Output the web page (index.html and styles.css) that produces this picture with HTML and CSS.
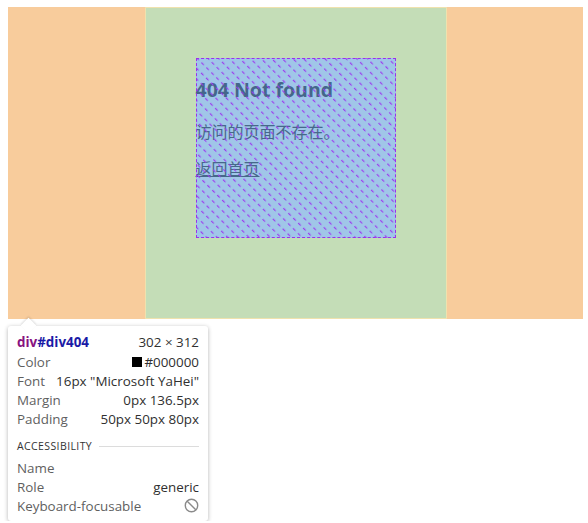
FILE: index.html
```html
<!DOCTYPE html>
<html lang="zh">
<head>
<meta charset="utf-8">
<title>404</title>
<link rel="stylesheet" href="styles.css">
</head>
<body>
<div class="page">
  <div class="margin-box">
    <div class="el">
      <div class="content">
        <h1 class="title">404 Not found</h1>
        <p class="msg">访问的页面不存在。</p>
        <p class="msg link-row"><a class="home" href="#">返回首页</a></p>
        <svg class="hatch" width="200" height="180" aria-hidden="true">
          <defs>
            <pattern id="hp" width="7.5" height="7" patternUnits="userSpaceOnUse" patternTransform="rotate(-45)">
              <line x1="0.6" y1="0" x2="0.6" y2="3.6" stroke="#9c3af0" stroke-width="1.15"/>
            </pattern>
          </defs>
          <rect x="0" y="0" width="200" height="180" fill="url(#hp)"/>
        </svg>
      </div>
    </div>
  </div>

  <div class="tip">
    <span class="arrow"></span>
    <div class="row head">
      <span class="sel"><span class="tag">div</span><span class="id">#div404</span></span>
      <span class="val">302 × 312</span>
    </div>
    <div class="row"><span class="lab">Color</span><span class="val"><span class="swatch"></span>#000000</span></div>
    <div class="row"><span class="lab">Font</span><span class="val">16px "Microsoft YaHei"</span></div>
    <div class="row"><span class="lab">Margin</span><span class="val">0px 136.5px</span></div>
    <div class="row"><span class="lab">Padding</span><span class="val">50px 50px 80px</span></div>
    <div class="sect"><span class="sect-name">ACCESSIBILITY</span><span class="rule"></span></div>
    <div class="row"><span class="lab">Name</span><span class="val"></span></div>
    <div class="row"><span class="lab">Role</span><span class="val">generic</span></div>
    <div class="row"><span class="lab">Keyboard-focusable</span>
      <svg class="ban" width="15" height="15" viewBox="0 0 14 14" aria-hidden="true">
        <circle cx="7" cy="7" r="5.8" fill="none" stroke="#8a8a8a" stroke-width="1.3"/>
        <line x1="3" y1="3" x2="11" y2="11" stroke="#8a8a8a" stroke-width="1.3"/>
      </svg>
    </div>
  </div>
</div>
</body>
</html>
```

FILE: styles.css
```css
html, body {
  margin: 0;
  padding: 0;
  background: #ffffff;
}

.page {
  padding: 7px 0 0 8px;
  width: 580px;
}

.margin-box {
  width: 575px;
  height: 312px;
  background: #f8cc9c;
  display: flex;
  justify-content: center;
}

.el {
  box-sizing: border-box;
  width: 302px;
  height: 312px;
  border: 1px solid #efe2ae;
  background: #c4ddb7;
  padding: 50px 50px 80px 50px;
}

.content {
  position: relative;
  width: 200px;
  height: 180px;
  background: #a0c6e8;
  font-family: "Noto Sans CJK SC", "Noto Sans", sans-serif;
  color: #46688a;
}

.content::after {
  content: "";
  position: absolute;
  inset: 0;
  border: 1px dashed #9a30ee;
  pointer-events: none;
}

.hatch {
  position: absolute;
  left: 0;
  top: 0;
  pointer-events: none;
}

.title {
  margin: 0;
  padding-top: 20px;
  font-size: 19.5px;
  line-height: 24px;
  font-weight: 700;
  color: #44678a;
  font-family: "Open Sans", "Noto Sans CJK SC", sans-serif;
}

.msg {
  margin: 18px 0 0 0;
  font-size: 16px;
  line-height: 22px;
}

.link-row {
  margin-top: 15px;
}

.home {
  color: #46688a;
  text-decoration: underline;
}

.tip {
  position: relative;
  box-sizing: border-box;
  width: 200px;
  margin-top: 7px;
  padding: 6px 9px 6px 9px;
  background: #ffffff;
  border-radius: 3px;
  box-shadow: 0 1px 4px rgba(0, 0, 0, 0.3);
  font-family: "Open Sans", "Noto Sans", sans-serif;
  font-size: 13.4px;
  color: #333333;
}

.arrow {
  position: absolute;
  left: 15px;
  top: -6px;
  width: 11px;
  height: 11px;
  background: #ffffff;
  transform: rotate(45deg);
  box-shadow: -1px -1px 2px rgba(0, 0, 0, 0.12);
}

.row {
  position: relative;
  display: flex;
  justify-content: space-between;
  align-items: center;
  height: 19px;
}

.row.head {
  height: 19px;
  margin-bottom: 1px;
  font-size: 13.4px;
}

.sel {
  font-weight: 700;
}

.tag {
  color: #881280;
}

.id {
  color: #1a1aa6;
}

.lab {
  color: #5f5f5f;
}

.val {
  color: #303030;
  display: flex;
  align-items: center;
  white-space: nowrap;
}

.swatch {
  display: inline-block;
  width: 10px;
  height: 10px;
  background: #000000;
  margin-right: 2px;
}

.sect {
  display: flex;
  align-items: center;
  height: 20px;
  margin-top: 8px;
  margin-bottom: 2px;
}

.sect-name {
  font-size: 10.5px;
  letter-spacing: 0.4px;
  color: #333333;
}

.rule {
  flex: 1;
  height: 1px;
  background: #dcdcdc;
  margin-left: 7px;
}

.ban {
  margin-right: 0;
}
```
